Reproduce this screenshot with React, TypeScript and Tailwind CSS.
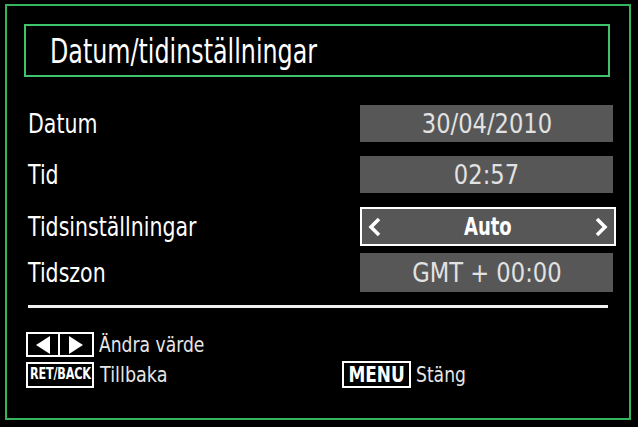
import React from 'react';

const font = "font-['DejaVu_Sans',sans-serif]";

const ValueBox: React.FC<{ children: React.ReactNode; h?: string }> = ({ children, h = 'h-[37px]' }) => (
  <div className={`w-[253px] ${h} bg-[#575757] flex items-center justify-center text-[26px] text-[#e2e2e2] leading-none`}>
    <span className="inline-block scale-x-[0.87]">{children}</span>
  </div>
);

const Row: React.FC<{ label: string; mt: string; children: React.ReactNode }> = ({ label, mt, children }) => (
  <div className={`flex items-center justify-between ${mt}`}>
    <span className="inline-block text-[27px] text-white leading-none scale-x-[0.76] origin-left">{label}</span>
    {children}
  </div>
);

const App: React.FC = () => {
  return (
    <div className={`w-[638px] h-[427px] bg-black pt-[4px] pl-[5px] ${font}`}>
      <div className="w-[626px] h-[416px] border-2 border-[#34b45e] flex flex-col">
        {/* Title */}
        <div className="ml-[17px] mt-[18px] w-[586px] h-[53px] border-2 border-[#3fc46c] flex items-center pl-[24px]">
          <span className="inline-block text-[34px] text-white leading-none scale-x-[0.70] origin-left">Datum/tidinställningar</span>
        </div>

        {/* Settings */}
        <div className="ml-[21px] mr-[16px] flex flex-col">
          <Row label="Datum" mt="mt-[28px]">
            <ValueBox>30/04/2010</ValueBox>
          </Row>
          <Row label="Tid" mt="mt-[14px]">
            <ValueBox>02:57</ValueBox>
          </Row>
          <Row label="Tidsinställningar" mt="mt-[14px]">
            <div className="w-[256px] h-[39px] border-2 border-white bg-[#575757] flex items-center justify-between px-[6px] text-white -mr-[3px]">
              <svg width="14" height="20" viewBox="0 0 14 20">
                <path d="M11 2 L3 10 L11 18" fill="none" stroke="white" strokeWidth="3.6" />
              </svg>
              <span className="inline-block text-[24px] font-bold leading-none scale-x-[0.75]">Auto</span>
              <svg width="14" height="20" viewBox="0 0 14 20">
                <path d="M3 2 L11 10 L3 18" fill="none" stroke="white" strokeWidth="3.6" />
              </svg>
            </div>
          </Row>
          <Row label="Tidszon" mt="mt-[7px]">
            <ValueBox h="h-[39px]">GMT + 00:00</ValueBox>
          </Row>
          <div className="mt-[13px] h-[3px] bg-[#f0f0f0] w-[580px]" />
        </div>

        {/* Footer */}
        <div className="ml-[19px] mt-[24px] flex flex-col gap-[4px]">
          <div className="flex items-center">
            <div className="flex h-[25px]">
              <div className="w-[34px] border-2 border-white flex items-center justify-center">
                <svg width="16" height="18" viewBox="0 0 16 18">
                  <path d="M15 0 L1 9 L15 18 Z" fill="white" />
                </svg>
              </div>
              <div className="w-[34px] border-2 border-l-0 border-white flex items-center justify-center">
                <svg width="16" height="18" viewBox="0 0 16 18">
                  <path d="M1 0 L15 9 L1 18 Z" fill="white" />
                </svg>
              </div>
            </div>
            <span className="ml-[5px] inline-block text-[22px] text-[#e6e6e6] leading-none scale-x-[0.78] origin-left">Ändra värde</span>
          </div>
          <div className="flex items-center">
            <div className="w-[316px] flex items-center">
              <div className="w-[68px] h-[26px] border-2 border-white flex items-center justify-center">
                <span className="inline-block font-bold text-[15px] text-white tracking-[-0.3px] leading-none scale-x-[0.75]">RET/BACK</span>
              </div>
              <span className="ml-[6px] inline-block text-[22px] text-[#e6e6e6] leading-none scale-x-[0.8] origin-left">Tillbaka</span>
            </div>
            <div className="w-[69px] h-[27px] border-2 border-white flex items-center justify-center">
              <span className="inline-block font-bold text-[22px] text-white leading-none scale-x-[0.77]">MENU</span>
            </div>
            <span className="ml-[5px] inline-block text-[22px] text-[#e6e6e6] leading-none scale-x-[0.78] origin-left">Stäng</span>
          </div>
        </div>
      </div>
    </div>
  );
};

export default App;
